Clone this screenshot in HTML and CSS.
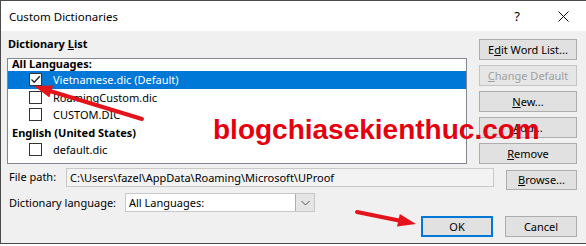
FILE: index.html
```html
<!DOCTYPE html>
<html lang="en">
<head>
  <meta charset="UTF-8" />
  <title>Custom Dictionaries</title>
  <link rel="stylesheet" href="styles.css">
</head>
<body>
  <div class="window">
    <div class="titlebar">
      <span class="title">Custom Dictionaries</span>
      <span class="ctl">?</span>
      <span class="ctl close">
        <svg width="11" height="11" viewBox="0 0 11 11"><path d="M0.5 0.5 L10.5 10.5 M10.5 0.5 L0.5 10.5" stroke="#111" stroke-width="1"/></svg>
      </span>
    </div>

    <div class="content">
      <div class="main">
        <div class="left">
          <div class="label bold">Dictionary <u>L</u>ist</div>
          <div class="listbox">
            <div class="group first">All Languages:</div>
            <div class="item selected">
              <span class="check">
                <svg width="11" height="11" viewBox="0 0 11 11"><path d="M1.5 5.5 L4.2 8.2 L9.8 2.2" fill="none" stroke="#222" stroke-width="1.3"/></svg>
              </span>
              Vietnamese.dic (Default)
            </div>
            <div class="item"><span class="check"></span>RoamingCustom.dic</div>
            <div class="item"><span class="check"></span>CUSTOM.DIC</div>
            <div class="group">English (United States)</div>
            <div class="item"><span class="check"></span>default.dic</div>
          </div>
        </div>
        <div class="buttons">
          <button>E<u>d</u>it Word List...</button>
          <button class="disabled"><u>C</u>hange Default</button>
          <button><u>N</u>ew...</button>
          <button><u>A</u>dd...</button>
          <button><u>R</u>emove</button>
        </div>
      </div>

      <div class="row path-row">
        <span class="field-label path-label">File path:</span>
        <div class="textbox">C:\Users\fazel\AppData\Roaming\Microsoft\UProof</div>
        <button class="browse"><u>B</u>rowse...</button>
      </div>

      <div class="row lang-row">
        <span class="field-label lang-label">Dictionary lan<u>g</u>uage:</span>
        <div class="select">
          <span class="select-text">All Languages:</span>
          <span class="drop">
            <svg width="9" height="6" viewBox="0 0 9 6"><path d="M0.5 1 L4.5 5 L8.5 1" fill="none" stroke="#555" stroke-width="1"/></svg>
          </span>
        </div>
      </div>

      <div class="row action-row">
        <button class="action ok">OK</button>
        <button class="action">Cancel</button>
      </div>
    </div>

    <div class="watermark">blogchiasekienthuc.com</div>

    <svg class="arrows" width="586" height="246" viewBox="0 0 586 246">
      <line x1="142" y1="119" x2="50" y2="91" stroke="#e3141b" stroke-width="4" stroke-linecap="round"/>
      <polygon points="34,86 53,85.5 49.4,97.5" fill="#e3141b"/>
      <line x1="357" y1="212" x2="399" y2="220.5" stroke="#e3141b" stroke-width="4" stroke-linecap="round"/>
      <polygon points="416,224 397,226.5 399.8,214" fill="#e3141b"/>
    </svg>
  </div>
</body>
</html>
```

FILE: styles.css
```css
body {
  margin: 0;
  background: #fff;
}

.window {
  position: relative;
  width: 586px;
  height: 244px;
  box-sizing: border-box;
  border-top: 1px solid #4a4a4a;
  border-left: 1px solid #4a4a4a;
  border-bottom: 1px solid #4a4a4a;
  background: #f0f0f0;
  font-family: "Noto Sans", sans-serif;
  font-size: 11px;
  color: #000;
  white-space: nowrap;
  overflow: hidden;
}

.titlebar {
  height: 30px;
  background: #fff;
  display: flex;
  align-items: center;
  padding-left: 8px;
}

.title {
  flex: 1;
  font-size: 11.5px;
}

.ctl {
  width: 46px;
  height: 30px;
  display: flex;
  align-items: center;
  justify-content: center;
  font-size: 13px;
}

.content {
  padding: 8px 9px 0 6px;
}

.main {
  display: flex;
  gap: 12px;
}

.left {
  width: 460px;
}

.label {
  height: 16px;
  line-height: 16px;
  margin: -3px 0 6px 1px;
}

.bold {
  font-weight: bold;
}

.listbox {
  height: 106px;
  box-sizing: border-box;
  border: 1px solid #828790;
  background: #fff;
}

.group {
  height: 17.5px;
  line-height: 17.5px;
  padding-left: 4px;
  font-weight: bold;
}

.group.first {
  height: 12px;
  line-height: 9px;
}

.item {
  height: 17.5px;
  line-height: 17.5px;
  display: flex;
  align-items: center;
  padding-left: 21px;
}

.item.selected {
  background: #0078d7;
  color: #fff;
}

.check {
  width: 13px;
  height: 13px;
  box-sizing: border-box;
  border: 1px solid #333;
  background: #fff;
  margin-right: 11px;
  display: flex;
  align-items: center;
  justify-content: center;
}

.buttons {
  width: 98px;
  display: flex;
  flex-direction: column;
  gap: 5px;
}

button {
  font-family: "Noto Sans", sans-serif;
  font-size: 11px;
  color: #000;
  background: #e1e1e1;
  border: 1px solid #adadad;
  height: 21px;
  padding: 0;
  line-height: 18px;
  white-space: nowrap;
}

.buttons button {
  width: 98px;
}

button.disabled {
  color: #a0a0a0;
  border-color: #c4c4c4;
  background: #e6e6e6;
}

.row {
  display: flex;
  align-items: flex-start;
}

.field-label {
  padding-left: 2px;
}

.path-row {
  margin-top: 4px;
}

.path-label {
  width: 57px;
  line-height: 17px;
}

.textbox {
  width: 428px;
  height: 19px;
  box-sizing: border-box;
  border: 1px solid #c8c8c8;
  background: #f3f3f3;
  padding-left: 3px;
  line-height: 17px;
  overflow: hidden;
}

.browse {
  width: 71px;
  height: 20px;
  margin: 2px 0 0 12px;
}

.lang-row {
  margin-top: 3px;
}

.lang-label {
  width: 116px;
  line-height: 19px;
}

.select {
  width: 190px;
  height: 19px;
  box-sizing: border-box;
  border: 1px solid #c8c8c8;
  background: #fff;
  display: flex;
}

.select-text {
  flex: 1;
  padding-left: 3px;
  line-height: 17px;
}

.drop {
  width: 18px;
  background: #e5e5e5;
  border-left: 1px solid #adadad;
  display: flex;
  align-items: center;
  justify-content: center;
}

.action-row {
  margin-top: 4px;
  justify-content: flex-end;
  gap: 12px;
}

.action {
  width: 72px;
}

.action.ok {
  border: 2px solid #0078d7;
}

.watermark {
  position: absolute;
  left: 212px;
  top: 115px;
  font-family: "Liberation Sans", Arial, sans-serif;
  font-weight: bold;
  font-size: 28px;
  line-height: 28px;
  color: #e5000f;
}

.arrows {
  position: absolute;
  left: -1px;
  top: -1px;
  pointer-events: none;
}
```
